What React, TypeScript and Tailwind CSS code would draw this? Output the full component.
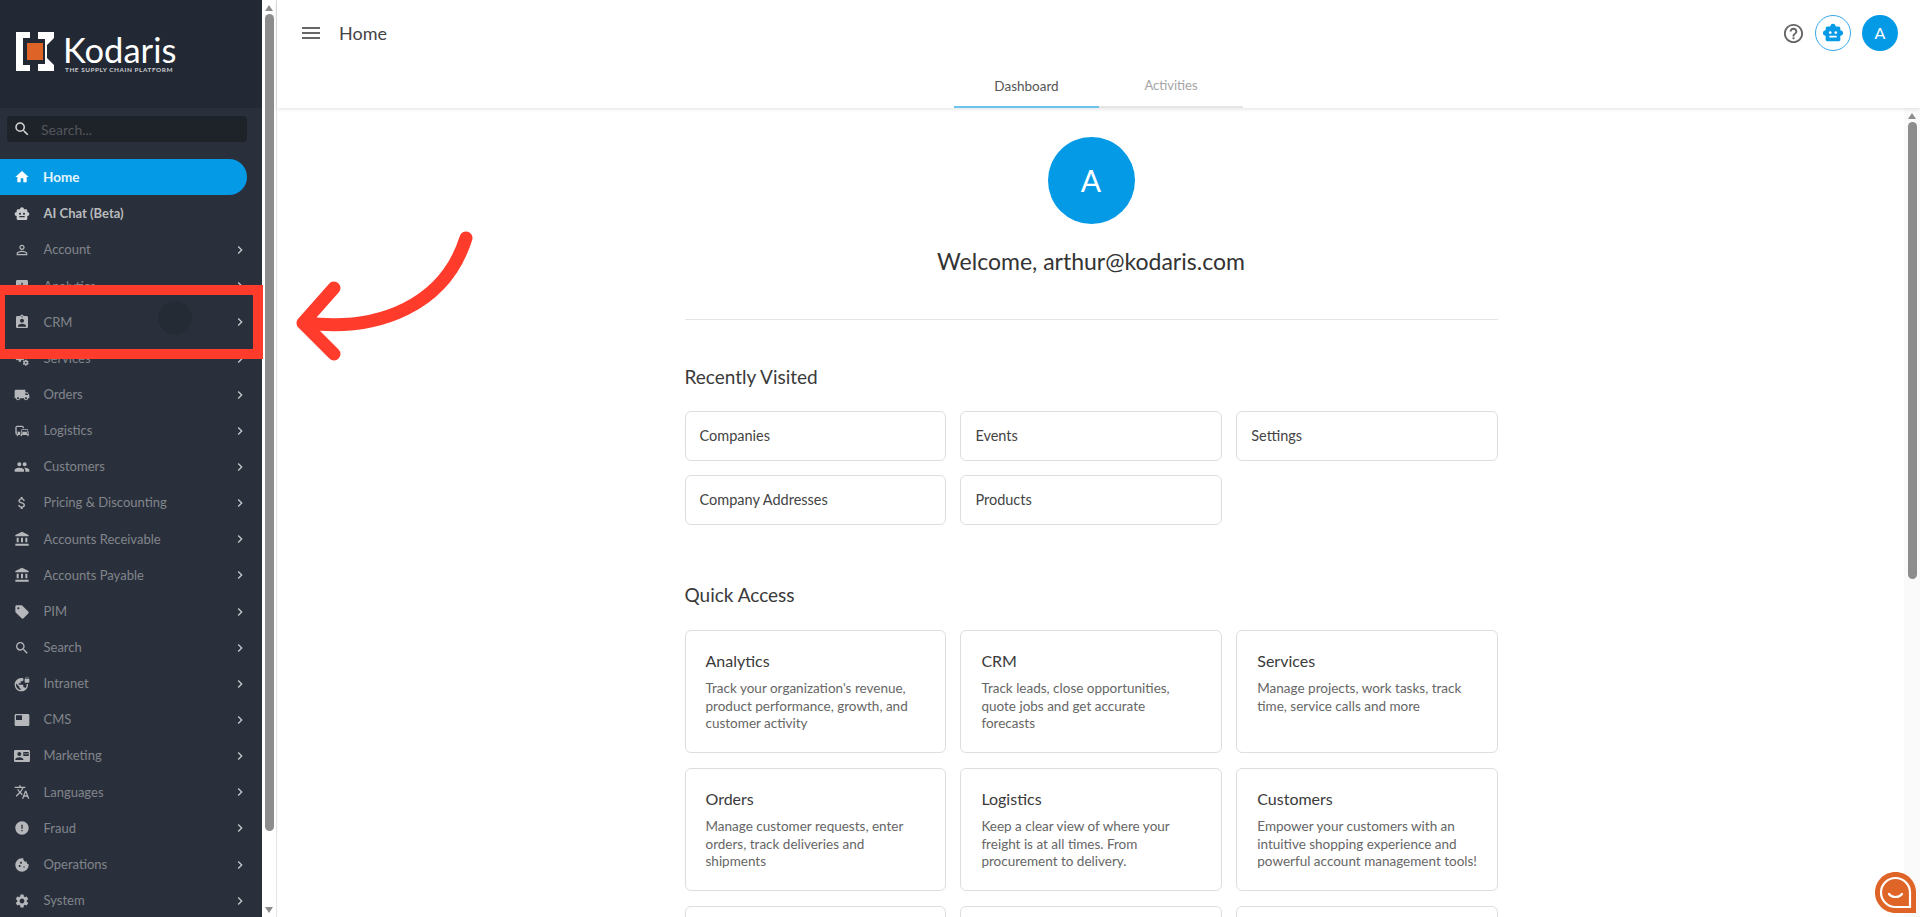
import { ReactNode } from "react";
import {
  MdHome, MdSmartToy, MdPersonOutline, MdAssessment, MdAssignmentInd, MdMiscellaneousServices,
  MdLocalShipping, MdCommute, MdPeople, MdAttachMoney, MdAccountBalance, MdSell, MdSearch,
  MdVpnLock, MdFeaturedVideo, MdContactMail, MdTranslate, MdError, MdCookie, MdSettings,
  MdChevronRight, MdMenu, MdHelpOutline,
} from "react-icons/md";

const navItems: { label: string; icon: ReactNode; chevron?: boolean }[] = [
  { label: "AI Chat (Beta)", icon: <MdSmartToy /> },
  { label: "Account", icon: <MdPersonOutline />, chevron: true },
  { label: "Analytics", icon: <MdAssessment />, chevron: true },
  { label: "CRM", icon: <MdAssignmentInd />, chevron: true },
  { label: "Services", icon: <MdMiscellaneousServices />, chevron: true },
  { label: "Orders", icon: <MdLocalShipping />, chevron: true },
  { label: "Logistics", icon: <MdCommute />, chevron: true },
  { label: "Customers", icon: <MdPeople />, chevron: true },
  { label: "Pricing & Discounting", icon: <MdAttachMoney />, chevron: true },
  { label: "Accounts Receivable", icon: <MdAccountBalance />, chevron: true },
  { label: "Accounts Payable", icon: <MdAccountBalance />, chevron: true },
  { label: "PIM", icon: <MdSell />, chevron: true },
  { label: "Search", icon: <MdSearch />, chevron: true },
  { label: "Intranet", icon: <MdVpnLock />, chevron: true },
  { label: "CMS", icon: <MdFeaturedVideo />, chevron: true },
  { label: "Marketing", icon: <MdContactMail />, chevron: true },
  { label: "Languages", icon: <MdTranslate />, chevron: true },
  { label: "Fraud", icon: <MdError />, chevron: true },
  { label: "Operations", icon: <MdCookie />, chevron: true },
  { label: "System", icon: <MdSettings />, chevron: true },
];

const recent = ["Companies", "Events", "Settings", "Company Addresses", "Products"];

const quick = [
  { title: "Analytics", text: "Track your organization's revenue, product performance, growth, and customer activity" },
  { title: "CRM", text: "Track leads, close opportunities, quote jobs and get accurate\nforecasts" },
  { title: "Services", text: "Manage projects, work tasks, track time, service calls and more" },
  { title: "Orders", text: "Manage customer requests, enter orders, track deliveries and shipments" },
  { title: "Logistics", text: "Keep a clear view of where your freight is at all times. From procurement to delivery." },
  { title: "Customers", text: "Empower your customers with an intuitive shopping experience and powerful account management tools!" },
  { title: "", text: "" },
  { title: "", text: "" },
  { title: "", text: "" },
];

function Logo() {
  return (
    <div className="h-[108px] bg-[#232934] flex items-start pl-4 pt-8 shrink-0">
      <svg width="38" height="39" viewBox="16 32 38 39" className="shrink-0">
        <path d="M16 32H30V38H23V65H30V71H16Z" fill="#fff" />
        <path d="M38 32H54V38L47 45V58L54 65V71H38V64H45V39H38Z" fill="#fff" />
        <rect x="27" y="43" width="16" height="17" fill="#dd6327" />
      </svg>
      <div className="ml-[9px] flex flex-col">
        <span className="text-[34.5px] leading-[33px] mt-[0.5px] text-white">Kodaris</span>
        <span className="text-[6.4px] leading-[6px] mt-[1px] ml-[2px] font-bold tracking-[0.55px] text-[#c9ccd0] whitespace-nowrap">THE SUPPLY CHAIN PLATFORM</span>
      </div>
    </div>
  );
}

function Sidebar() {
  return (
    <div className="w-[262px] shrink-0 bg-[#2a303b] flex flex-col">
      <Logo />
      <div className="h-[26px] mt-2 ml-[7px] w-[240px] bg-[#1e2229] rounded flex items-center pl-[6px] shrink-0">
        <MdSearch className="text-[#d5d5d5] text-[18px]" />
        <span className="ml-[10px] text-[14px] text-[#52565c]">Search...</span>
      </div>
      <div className="mt-[17px] mb-[1px] w-[247px] h-[36px] bg-[#059ae6] rounded-r-full flex items-center pl-[14px] shrink-0">
        <MdHome className="text-white text-[16px] w-[16px]" />
        <span className="ml-[13px] text-[13.5px] font-bold text-white/90">Home</span>
      </div>
      {navItems.map((item, i) => (
        <div key={item.label} className="w-[248px] h-[36.15px] flex items-center pl-[14px] shrink-0">
          <span className={`text-[16px] w-[16px] flex justify-center ${i === 0 ? "text-[#c9cbce]" : "text-[#b5b7ba]"}`}>{item.icon}</span>
          <span className={`ml-[13.5px] text-[13px] flex-1 whitespace-nowrap ${i === 0 ? "text-[#b9bbbf] font-bold" : "text-[#81858c]"}`}>{item.label}</span>
          {item.chevron && <MdChevronRight className="text-[#c4c6c9] text-[16px]" />}
        </div>
      ))}
    </div>
  );
}

function ScrollTrack({ thumb, light }: { thumb: string; light?: boolean }) {
  return (
    <div className={`h-full relative ${light ? "w-4 bg-[#fafafa]" : "w-[15px] bg-white border-r border-[#e4e4e4]"}`}>
      <div className="flex flex-col items-center h-full pt-[5px] pb-[4px]">
        <div className="w-0 h-0 border-x-[4px] border-x-transparent border-b-[6px] border-b-[#8d8d8d]" />
        <div className={`w-[9px] rounded-full bg-[#8d8d8d] mt-[3px] ${thumb}`} />
        <div className="flex-1" />
        <div className="w-0 h-0 border-x-[4px] border-x-transparent border-t-[6px] border-t-[#8d8d8d]" />
      </div>
    </div>
  );
}

function Header() {
  return (
    <div className="h-[108px] shrink-0 bg-white shadow-[0_1px_4px_rgba(0,0,0,0.12)] relative z-10 flex flex-col">
      <div className="h-[66px] flex items-center pl-[22px] pr-[22px]">
        <MdMenu className="text-[#666] text-[24px]" />
        <span className="ml-[16px] text-[18px] text-[#444]">Home</span>
        <div className="flex-1" />
        <MdHelpOutline className="text-[#666] text-[23px]" />
        <div className="ml-[10px] w-[36px] h-[36px] rounded-full border border-[#35a8e8] flex items-center justify-center">
          <MdSmartToy className="text-[#059ae6] text-[22px]" />
        </div>
        <div className="ml-[11px] w-[36px] h-[36px] rounded-full bg-[#059ae6] flex items-center justify-center text-white text-[16px]">A</div>
      </div>
      <div className="flex justify-center h-[42px]">
        <div className="w-[145px] flex items-center justify-center text-[13.5px] text-[#555] border-b-2 border-[#6cc3ec]">Dashboard</div>
        <div className="w-[144px] flex items-center justify-center text-[13px] text-[#a5a5a5] border-b-2 border-[#e6e6e6]">Activities</div>
      </div>
    </div>
  );
}

function Content() {
  return (
    <div className="flex-1 overflow-hidden pl-[1px]">
      <div className="mx-auto w-[813px] flex flex-col">
        <div className="mt-[29px] w-[87px] h-[87px] rounded-full bg-[#059ae6] mx-auto flex items-center justify-center text-white text-[30px]">A</div>
        <div className="mt-[19px] text-center text-[23px] leading-[36px] text-[#333]">Welcome, arthur@kodaris.com</div>
        <div className="mt-[40px] h-px bg-[#e4e4e4]" />
        <div className="mt-[46px] text-[19px] leading-[22px] text-[#3a3a3a]">Recently Visited</div>
        <div className="mt-[23px] grid grid-cols-3 gap-x-[14.7px] gap-y-[14px]">
          {recent.map((r) => (
            <div key={r} className="h-[50px] rounded-md border border-[#dedee2] flex items-center pl-[14px] text-[14.5px] text-[#444]">{r}</div>
          ))}
        </div>
        <div className="mt-[59px] text-[19px] leading-[22px] text-[#3a3a3a]">Quick Access</div>
        <div className="mt-[24px] grid grid-cols-3 gap-x-[14.7px] gap-y-[15px]">
          {quick.map((q, i) => (
            <div key={i} className="h-[123px] rounded-md border border-[#dedee2] pl-[20px] pr-[17px] pt-[20px]">
              <div className="text-[16px] leading-[20px] text-[#3a3a3a]">{q.title}</div>
              <div className="mt-[9px] text-[13.5px] leading-[17.7px] text-[#666] whitespace-pre-line">{q.text}</div>
            </div>
          ))}
        </div>
      </div>
    </div>
  );
}

function Annotation() {
  return (
    <>
      <div className="absolute left-[158px] top-[301px] w-[34px] h-[34px] rounded-full bg-black/10" />
      <div className="absolute left-[-5px] top-[285px] w-[268px] h-[74px] border-[10px] border-[#ff3b2b]" />
      <svg className="absolute left-[280px] top-[220px]" width="200" height="150" viewBox="280 220 200 150" fill="none" stroke="#ff3b2b" strokeWidth="13" strokeLinecap="round" strokeLinejoin="round">
        <path d="M306 323C379 332 445 305 466 238" />
        <path d="M334 288L303 323L334 354" />
      </svg>
    </>
  );
}

function ChatBubble() {
  return (
    <svg className="absolute left-[1875px] top-[872px]" width="41" height="41" viewBox="0 0 41 41">
      <path d="M20.5 0C32 0 41 9 41 20.5V41H20.5C9 41 0 32 0 20.5S9 0 20.5 0Z" fill="#df6428" />
      <path d="M20.5 6C28.5 6 35 12.5 35 20.5V35H20.5C12.5 35 6 28.5 6 20.5S12.5 6 20.5 6Z" fill="none" stroke="#fff" strokeWidth="2.2" />
      <path d="M14 22C17 26 24 26 27 22" fill="none" stroke="#fff" strokeWidth="2.2" strokeLinecap="round" />
    </svg>
  );
}

export default function App() {
  return (
    <div className="relative w-[1920px] h-[917px] overflow-hidden flex bg-white font-['Lato',sans-serif]">
      <Sidebar />
      <ScrollTrack thumb="h-[817px]" />
      <div className="flex-1 flex flex-col min-w-0">
        <Header />
        <div className="flex-1 flex min-h-0">
          <Content />
          <ScrollTrack thumb="h-[457px]" light />
        </div>
      </div>
      <Annotation />
      <ChatBubble />
    </div>
  );
}
